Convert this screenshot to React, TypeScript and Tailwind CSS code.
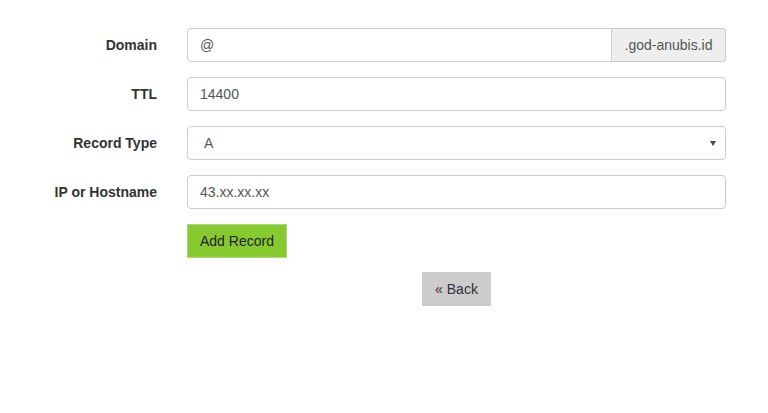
export default function App() {
  const labelCls =
    "w-[157px] shrink-0 text-right font-bold text-[14px] leading-[20px] pt-[7px] text-[#333]";
  const inputCls =
    "h-[34px] w-full border border-[#ccc] rounded-[4px] px-[12px] text-[14px] text-[#555] bg-white outline-none";

  return (
    <div
      className="min-h-[413px] w-[768px] bg-white pt-[28px]"
      style={{ fontFamily: '"Liberation Sans", Arial, sans-serif' }}
    >
      <form className="flex flex-col gap-[15px]">
        {/* DOMAIN */}
        <div className="flex">
          <label className={labelCls}>Domain</label>
          <div className="ml-[30px] flex w-[539px]">
            <input
              className="h-[34px] flex-1 min-w-0 border border-[#ccc] rounded-l-[4px] px-[12px] text-[14px] text-[#555] outline-none"
              defaultValue="@"
            />
            <span className="h-[34px] w-[114px] flex items-center justify-center bg-[#eee] border border-l-0 border-[#ccc] rounded-r-[4px] text-[14px] text-[#555]">
              .god-anubis.id
            </span>
          </div>
        </div>

        {/* TTL */}
        <div className="flex">
          <label className={labelCls}>TTL</label>
          <div className="ml-[30px] w-[539px]">
            <input className={inputCls} defaultValue="14400" />
          </div>
        </div>

        {/* RECORD TYPE */}
        <div className="flex">
          <label className={labelCls}>Record Type</label>
          <div className="ml-[30px] w-[539px]">
            <div className="h-[34px] w-full border border-[#ccc] rounded-[4px] pl-[16px] pr-[9px] flex items-center justify-between text-[14px] text-[#555]">
              <span>A</span>
              <svg width="6" height="5" viewBox="0 0 6 5">
                <path d="M0 0 H6 L3 5 Z" fill="#444" />
              </svg>
            </div>
          </div>
        </div>

        {/* IP */}
        <div className="flex">
          <label className={labelCls}>IP or Hostname</label>
          <div className="ml-[30px] w-[539px]">
            <input className={inputCls} defaultValue="43.xx.xx.xx" />
          </div>
        </div>

        <div className="flex flex-col gap-[14px]">
          <div className="flex">
            <div className="w-[157px] shrink-0" />
            <div className="ml-[30px]">
              <button
                type="button"
                className="h-[34px] px-[12px] bg-[#86ca2f] border border-[#a6dc72] text-[14px] text-[#222]"
              >
                Add Record
              </button>
            </div>
          </div>

          <div className="flex">
            <div className="w-[157px] shrink-0" />
            <div className="ml-[30px] w-[539px] flex justify-center">
              <button
                type="button"
                className="h-[34px] px-[13px] bg-[#ccc] text-[14px] text-[#333]"
              >
                « Back
              </button>
            </div>
          </div>
        </div>
      </form>
    </div>
  );
}
